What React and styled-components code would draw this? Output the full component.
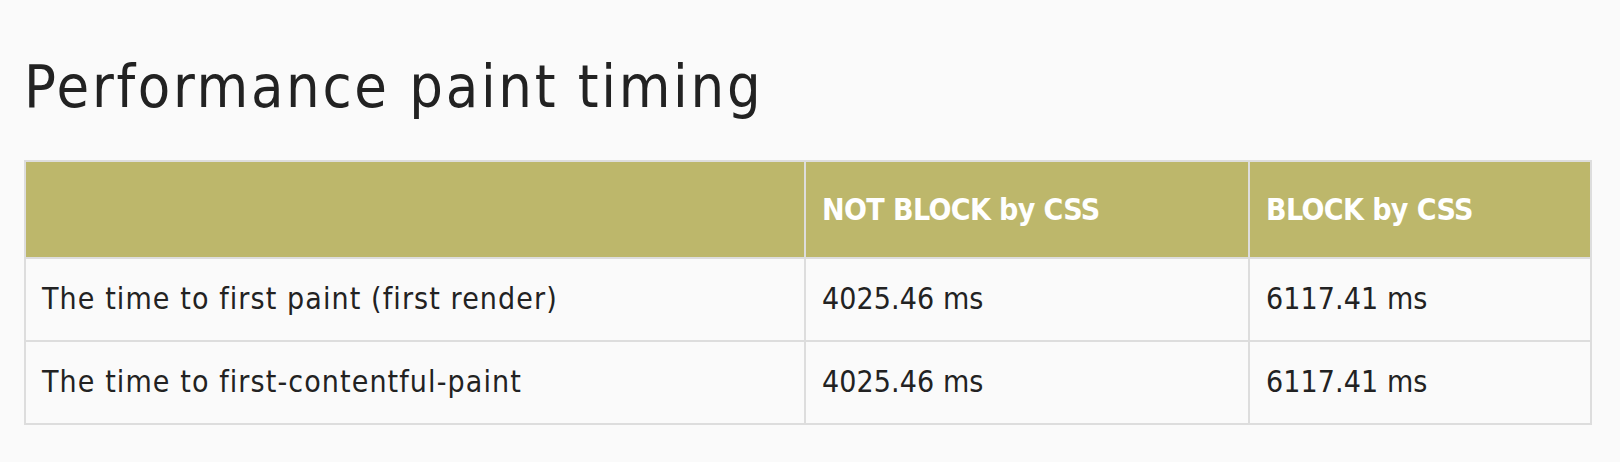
import React from "react";
import styled, { createGlobalStyle } from "styled-components";

const Global = createGlobalStyle`
  html, body { margin: 0; padding: 0; background: #fafafa; }
  body { font-family: "DejaVu Sans Condensed", "DejaVu Sans", sans-serif; color: #222; }
`;

const Page = styled.main`
  padding: 51px 28px 30px 24px;
`;

const Title = styled.h1`
  margin: 0 0 37px;
  font-size: 59px;
  font-weight: 400;
  line-height: 72px;
  letter-spacing: 2.7px;
  color: #222;
`;

const Table = styled.table`
  width: 1568px;
  border-collapse: collapse;
  border: 2px solid #ddd;
  table-layout: fixed;
`;

const Th = styled.th`
  background: #bdb76b;
  color: #fff;
  font-size: 30px;
  font-weight: 700;
  text-align: left;
  line-height: 95px;
  letter-spacing: -0.6px;
  padding: 0 16px;
  border: 2px solid #ddd;
  white-space: nowrap;
`;

const Td = styled.td`
  font-size: 30px;
  font-weight: 400;
  line-height: 79px;
  letter-spacing: ${(p) => (p.$numeric ? "0.1px" : "1.1px")};
  padding: 0 16px 2px;
  border: 2px solid #ddd;
  white-space: nowrap;
  color: #222;
`;

const rows = [
  ["The time to first paint (first render)", "4025.46 ms", "6117.41 ms"],
  ["The time to first-contentful-paint", "4025.46 ms", "6117.41 ms"],
];

export default function App() {
  return (
    <Page>
      <Global />
      <Title>Performance paint timing</Title>
      <Table>
        <colgroup>
          <col style={{ width: 780 }} />
          <col style={{ width: 444 }} />
          <col />
        </colgroup>
        <thead>
          <tr>
            <Th></Th>
            <Th>NOT BLOCK by CSS</Th>
            <Th>BLOCK by CSS</Th>
          </tr>
        </thead>
        <tbody>
          {rows.map((r) => (
            <tr key={r[0]}>
              {r.map((c, i) => (
                <Td key={i} $numeric={i > 0}>
                  {c}
                </Td>
              ))}
            </tr>
          ))}
        </tbody>
      </Table>
    </Page>
  );
}
